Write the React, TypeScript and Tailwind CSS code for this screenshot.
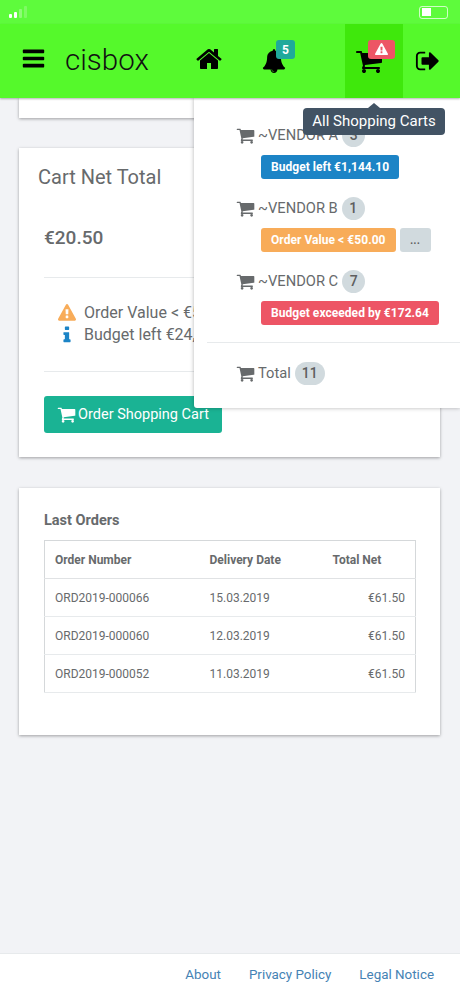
import type { ReactNode } from 'react'

const paths = {
  bars: 'M1664 1344v128q0 26-19 45t-45 19h-1408q-26 0-45-19t-19-45v-128q0-26 19-45t45-19h1408q26 0 45 19t19 45zm0-512v128q0 26-19 45t-45 19h-1408q-26 0-45-19t-19-45v-128q0-26 19-45t45-19h1408q26 0 45 19t19 45zm0-512v128q0 26-19 45t-45 19h-1408q-26 0-45-19t-19-45v-128q0-26 19-45t45-19h1408q26 0 45 19t19 45z',
  home: 'M1472 992v480q0 26-19 45t-45 19h-384v-384h-256v384h-384q-26 0-45-19t-19-45v-480q0-1 .5-3t.5-3l575-474 575 474q1 2 1 6zm223-69l-62 74q-8 9-21 11h-3q-13 0-21-7l-692-577-692 577q-12 8-24 7-13-2-21-11l-62-74q-8-10-7-23.5t11-21.5l719-599q32-26 76-26t76 26l244 204v-195q0-14 9-23t23-9h192q14 0 23 9t9 23v408l219 182q10 8 11 21.5t-7 23.5z',
  bell: 'M912 1696q0-16-16-16-59 0-101.5-42.5t-42.5-101.5q0-16-16-16t-16 16q0 73 51.5 124.5t124.5 51.5q16 0 16-16zm816-288q0 52-38 90t-90 38h-448q0 106-75 181t-181 75-181-75-75-181h-448q-52 0-90-38t-38-90q50-42 91-88t85-119.5 74.5-158.5 50-206 19.5-260q0-152 117-282.5t307-158.5q-8-19-8-39 0-40 28-68t68-28 68 28 28 68q0 20-8 39 190 28 307 158.5t117 282.5q0 139 19.5 260t50 206 74.5 158.5 85 119.5 91 88z',
  cart: 'M704 1536q0 52-38 90t-90 38-90-38-38-90 38-90 90-38 90 38 38 90zm896 0q0 52-38 90t-90 38-90-38-38-90 38-90 90-38 90 38 38 90zm128-1088v512q0 24-16.500 42.500t-40.500 21.500l-1044 122q13 60 13 70 0 16-24 64h920q26 0 45 19t19 45-19 45-45 19h-1024q-26 0-45-19t-19-45q0-11 8-31.500t16-36 21.500-40 15.500-29.500l-177-823h-204q-26 0-45-19t-19-45 19-45 45-19h256q16 0 28.500 6.500t19.500 15.500 13 24.500 8 26 5.500 29.500 4.500 26h1201q26 0 45 19t19 45z',
  signOut: 'M704 1440q0 4 1 20t.5 26.500-3 23.500-10 19.500-20.500 6.500h-320q-119 0-203.500-84.500t-84.500-203.500v-704q0-119 84.500-203.500t203.500-84.500h320q13 0 22.500 9.500t9.500 22.500q0 4 1 20t.5 26.500-3 23.500-10 19.500-20.500 6.500h-320q-66 0-113 47t-47 113v704q0 66 47 113t113 47h312l11.500 1 11.500 3 8 5.500 7 9 2 13.500zm928-544q0 26-19 45l-544 544q-19 19-45 19t-45-19-19-45v-288h-448q-26 0-45-19t-19-45v-384q0-26 19-45t45-19h448v-288q0-26 19-45t45-19 45 19l544 544q19 19 19 45z',
  warning: 'M1024 1375v-190q0-14-9.500-23.500t-22.500-9.500h-192q-13 0-22.500 9.500t-9.500 23.500v190q0 14 9.500 23.500t22.500 9.500h192q13 0 22.500-9.500t9.500-23.500zm-2-374l18-459q0-12-10-19-13-11-24-11h-220q-11 0-24 11-10 7-10 21l17 457q0 10 10 16.500t24 6.500h185q14 0 23.500-6.500t10.500-16.500zm-14-934l768 1408q35 63-2 126-17 29-46.500 46t-63.500 17h-1536q-34 0-63.500-17t-46.500-46q-37-63-2-126l768-1408q17-31 47-49t65-18 65 18 47 49z',
  info: 'M1216 1344v128q0 26-19 45t-45 19h-512q-26 0-45-19t-19-45v-128q0-26 19-45t45-19h64v-384h-64q-26 0-45-19t-19-45v-128q0-26 19-45t45-19h384q26 0 45 19t19 45v576h64q26 0 45 19t19 45zm-128-1152v192q0 26-19 45t-45 19h-256q-26 0-45-19t-19-45v-192q0-26 19-45t45-19h256q26 0 45 19t19 45z',
}

function Icon({ name, className }: { name: keyof typeof paths; className: string }) {
  return (
    <svg viewBox="0 0 1792 1792" fill="currentColor" className={className}>
      <path d={paths[name]} />
    </svg>
  )
}

function StatusBar() {
  return (
    <div className="flex h-6 items-center justify-between bg-[#5efb3c] pl-[9px] pr-[12px]">
      <div className="flex items-end gap-[2px]">
        <span className="h-[4px] w-[3px] rounded-[1px] bg-white" />
        <span className="h-[6px] w-[3px] rounded-[1px] bg-white" />
        <span className="h-[9px] w-[3px] rounded-[1px] bg-white/30" />
        <span className="h-[12px] w-[3px] rounded-[1px] bg-white/20" />
      </div>
      <div className="flex h-[13px] w-[29px] items-center rounded-[3px] border border-white/70 pl-[2px]">
        <span className="h-[8px] w-[9px] bg-white" />
      </div>
    </div>
  )
}

function NavBar() {
  return (
    <nav className="relative z-20 flex h-[74px] items-stretch bg-[#55f92b] shadow-[0_1px_2px_rgba(0,0,0,0.3)]">
      <div className="ml-[21px] flex w-[44px] items-center pb-[5px]">
        <Icon name="bars" className="h-[25px] w-[25px] text-black" />
      </div>
      <span className="flex w-[130px] items-center pb-[2px] text-[29.5px] font-light text-[#111]">cisbox</span>
      <div className="flex w-[66px] items-center pb-[4px]">
        <Icon name="home" className="h-[28px] w-[28px] text-black" />
      </div>
      <div className="relative flex w-[83px] items-center">
        <Icon name="bell" className="ml-[1px] h-[24px] w-[24px] text-black" />
        <span className="absolute left-[15px] top-[16px] flex h-[19px] w-[19px] items-center justify-center rounded-[3px] bg-[#1fa99b] text-[12px] font-bold text-white">
          5
        </span>
      </div>
      <div className="relative flex w-[60px] items-center border-x border-[#55f92b] bg-[#3fe80c] pl-[10px]">
        <Icon name="cart" className="h-[28px] w-[28px] text-black" />
        <span className="absolute left-[23px] top-[16px] flex h-[19px] w-[27px] items-center justify-center rounded-[3px] bg-[#ed5565] text-white">
          <Icon name="warning" className="h-[13px] w-[13px]" />
        </span>
      </div>
      <div className="flex flex-1 items-center pl-[11px]">
        <Icon name="signOut" className="h-[26px] w-[26px] text-black" />
      </div>
    </nav>
  )
}

function Pill({ color, children }: { color: string; children: ReactNode }) {
  return (
    <span className={`flex h-[24px] items-center rounded-[3px] px-[10px] text-[12px] font-bold tracking-[0.05px] text-white ${color}`}>
      {children}
    </span>
  )
}

function CartRow({ label, count }: { label: string; count: string }) {
  return (
    <div className="flex h-[23px] items-center text-[14.7px] text-[#676a6c]">
      <Icon name="cart" className="-ml-[1px] mr-[3px] h-[19px] w-[19px]" />
      <span>{label}</span>
      <span className="ml-[4px] flex h-[23px] min-w-[23px] items-center justify-center rounded-full bg-[#d1dade] px-[7px] text-[14px] font-medium text-[#5e5e5e]">
        {count}
      </span>
    </div>
  )
}

function CartsDropdown() {
  return (
    <div className="absolute right-0 top-[98px] z-10 h-[310px] w-[266px] rounded-bl-[3px] bg-white pl-[43px] pt-[26px] shadow-[0_0_4px_rgba(0,0,0,0.3)]">
      <CartRow label="~VENDOR A" count="3" />
      <div className="ml-[24px] mt-[8px] flex gap-[4px]">
        <Pill color="bg-[#1c84c6]">Budget left €1,144.10</Pill>
      </div>
      <div className="mt-[18px]">
        <CartRow label="~VENDOR B" count="1" />
      </div>
      <div className="ml-[24px] mt-[8px] flex gap-[4px]">
        <Pill color="bg-[#f8ac59]">Order Value &lt; €50.00</Pill>
        <span className="flex h-[24px] w-[31px] items-center justify-center rounded-[3px] bg-[#d1dade] text-[12px] font-medium text-[#5e5e5e]">
          ...
        </span>
      </div>
      <div className="mt-[18px]">
        <CartRow label="~VENDOR C" count="7" />
      </div>
      <div className="ml-[24px] mt-[8px] flex gap-[4px]">
        <Pill color="bg-[#ed5565]">Budget exceeded by €172.64</Pill>
      </div>
      <div className="-ml-[30px] mt-[17px] border-t border-[#e7eaec]" />
      <div className="mt-[19px] flex h-[23px] items-center text-[14.7px] text-[#676a6c]">
        <Icon name="cart" className="-ml-[1px] mr-[3px] h-[19px] w-[19px]" />
        <span>Total</span>
        <span className="ml-[4px] flex h-[23px] w-[30px] items-center justify-center rounded-full bg-[#d1dade] text-[14px] font-medium text-[#5e5e5e]">
          11
        </span>
      </div>
    </div>
  )
}

function Tooltip() {
  return (
    <div className="absolute left-[303px] top-[108px] z-30 flex h-[27px] w-[142px] items-center justify-center rounded-[4px] bg-[#425364] text-[15px] text-white">
      <span className="absolute -top-[5px] left-[65px] h-0 w-0 border-x-[6px] border-b-[5px] border-x-transparent border-b-[#425364]" />
      All Shopping Carts
    </div>
  )
}

function CartTotalCard() {
  return (
    <section className="relative h-[309px] bg-white shadow-[0_1px_3px_rgba(0,0,0,0.35)]">
      <h2 className="pl-[19px] pt-[16px] text-[20px] leading-[26px] text-[#676a6c]">Cart Net Total</h2>
      <div className="mx-[25px]">
        <p className="mt-[36px] h-[51px] text-[19px] font-medium leading-[24px] text-[#676a6c]">€20.50</p>
        <div className="border-t border-[#e7eaec]" />
        <div className="h-[93px] pl-[14px] pt-[24px] text-[16px] leading-[22px] text-[#676a6c]">
          <div className="flex items-center">
            <Icon name="warning" className="mr-[8px] h-[18px] w-[18px] text-[#f8ac59]" />
            Order Value &lt; €50.00
          </div>
          <div className="flex items-center">
            <Icon name="info" className="-ml-[1px] mr-[7px] h-[20px] w-[20px] text-[#1c84c6]" />
            Budget left €24,855.90
          </div>
        </div>
        <div className="border-t border-[#e7eaec]" />
        <button className="mt-[24px] flex h-[37px] w-[178px] items-center justify-center rounded-[3px] bg-[#1ab394] text-[14.5px] text-white">
          <Icon name="cart" className="mr-[2px] h-[19px] w-[19px]" />
          Order Shopping Cart
        </button>
      </div>
    </section>
  )
}

const orders = [
  ['ORD2019-000066', '15.03.2019', '€61.50'],
  ['ORD2019-000060', '12.03.2019', '€61.50'],
  ['ORD2019-000052', '11.03.2019', '€61.50'],
]

function LastOrdersCard() {
  return (
    <section className="mt-[31px] h-[247px] bg-white px-[25px] pt-[24px] shadow-[0_1px_3px_rgba(0,0,0,0.35)]">
      <h3 className="h-[28px] text-[14.5px] font-bold leading-[18px] text-[#676a6c]">Last Orders</h3>
      <table className="w-[372px] table-fixed border-collapse border border-[#d5d8da] text-[12px] text-[#676a6c]">
        <thead>
          <tr className="h-[38px] border-b border-[#e0e2e4] text-left font-bold">
            <th className="w-[154px] pl-[10px] font-bold">Order Number</th>
            <th className="w-[123px] pl-[11px] font-bold">Delivery Date</th>
            <th className="pl-[11px] font-bold">Total Net</th>
          </tr>
        </thead>
        <tbody>
          {orders.map(([number, date, total]) => (
            <tr key={number} className="h-[38px] border-b border-[#e7eaec]">
              <td className="pl-[10px]">{number}</td>
              <td className="pl-[11px]">{date}</td>
              <td className="pr-[10px] text-right">{total}</td>
            </tr>
          ))}
        </tbody>
      </table>
    </section>
  )
}

function Footer() {
  return (
    <footer className="flex h-[43px] items-center justify-end gap-[28px] border-t border-[#e7eaec] bg-white pr-[26px] text-[13.4px] text-[#4582b4]">
      <a href="#">About</a>
      <a href="#">Privacy Policy</a>
      <a href="#">Legal Notice</a>
    </footer>
  )
}

export default function App() {
  return (
    <div className="relative flex h-[996px] w-[460px] flex-col overflow-hidden bg-[#f2f3f6] font-['Roboto',sans-serif]">
      <StatusBar />
      <NavBar />
      <CartsDropdown />
      <Tooltip />
      <main className="flex-1 pl-[19px] pr-[20px]">
        <div className="mb-[30px] h-[20px] bg-white shadow-[0_1px_3px_rgba(0,0,0,0.35)]" />
        <CartTotalCard />
        <LastOrdersCard />
      </main>
      <Footer />
    </div>
  )
}
